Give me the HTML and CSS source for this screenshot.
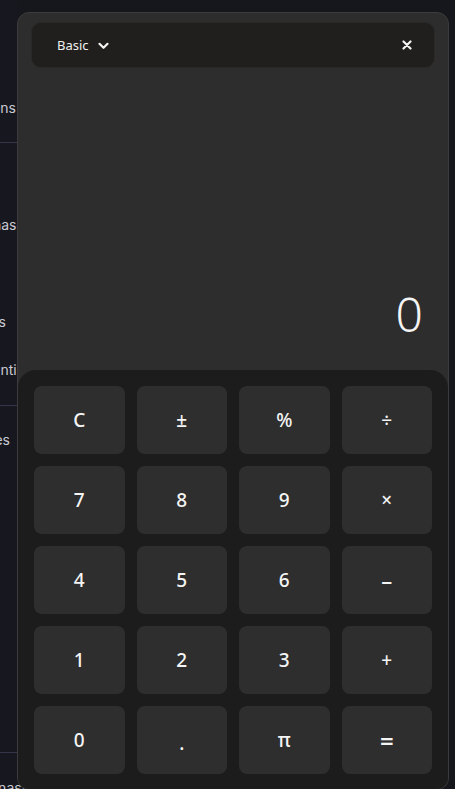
FILE: index.html
```html
<!DOCTYPE html>
<html lang="en">
<head>
<meta charset="utf-8">
<title>Calculator</title>
<link rel="stylesheet" href="styles.css">
</head>
<body>
<nav class="sidebar">
  <div class="nav-item item-functions"><span>Functions</span></div>
  <div class="divider div-1"></div>
  <div class="nav-item item-purchases"><span>Purchases</span></div>
  <div class="nav-item item-tools"><span>Tools</span></div>
  <div class="nav-item item-sentiment"><span>Sentiment</span></div>
  <div class="divider div-2"></div>
  <div class="nav-item item-templates"><span>Templates</span></div>
  <div class="divider div-3"></div>
  <div class="nav-item item-gym"><span>Gymnastics</span></div>
</nav>

<section class="calc">
  <header class="calc-header">
    <button class="mode">Basic
      <svg class="chev" width="11" height="8" viewBox="0 0 11 8"><path d="M1.5 1.8 L5.5 5.8 L9.5 1.8" fill="none" stroke="#f2f2f2" stroke-width="2.2" stroke-linecap="round" stroke-linejoin="round"/></svg>
    </button>
    <button class="close" aria-label="Close">
      <svg width="10" height="10" viewBox="0 0 10 10"><path d="M1.5 1.5 L8.5 8.5 M8.5 1.5 L1.5 8.5" stroke="#f2f2f2" stroke-width="2.2" stroke-linecap="round"/></svg>
    </button>
  </header>
  <div class="display">0</div>
  <div class="keypad">
    <button class="key">C</button>
    <button class="key">±</button>
    <button class="key">%</button>
    <button class="key">÷</button>
    <button class="key">7</button>
    <button class="key">8</button>
    <button class="key">9</button>
    <button class="key">×</button>
    <button class="key">4</button>
    <button class="key">5</button>
    <button class="key">6</button>
    <button class="key key-minus">–</button>
    <button class="key">1</button>
    <button class="key">2</button>
    <button class="key">3</button>
    <button class="key">+</button>
    <button class="key">0</button>
    <button class="key key-dot">.</button>
    <button class="key">π</button>
    <button class="key key-eq">=</button>
  </div>
</section>
</body>
</html>
```
FILE: styles.css
```css
* { box-sizing: border-box; }
html, body { margin: 0; padding: 0; }
body {
  width: 455px;
  height: 789px;
  overflow: hidden;
  background: #16161d;
  font-family: "Noto Sans", "Open Sans", sans-serif;
  position: relative;
}

.sidebar {
  width: 17px;
  height: 789px;
  display: flex;
  flex-direction: column;
  background: #17171f;
  font-family: Inter, "Noto Sans", sans-serif;
  font-size: 14px;
  color: #c9c9d2;
}
.sidebar > * { flex-shrink: 0; }
.nav-item {
  display: flex;
  justify-content: flex-end;
  white-space: nowrap;
  height: 20px;
  line-height: 20px;
}
.divider { height: 1px; background: #35354a; width: 100%; }

.item-functions { margin-top: 98px; padding-right: 1px; }
.div-1 { margin-top: 24px; }
.item-purchases { margin-top: 72px; margin-right: -15px; }
.item-tools { margin-top: 77px; padding-right: 11px; }
.item-sentiment { margin-top: 28px; margin-right: -33px; }
.div-2 { margin-top: 25px; }
.item-templates { margin-top: 24px; padding-right: 7px; }
.div-3 { margin-top: 302px; }
.item-gym { margin-top: 25px; margin-right: -28px; }

.calc {
  position: absolute;
  left: 17px;
  top: 12px;
  width: 432px;
  height: 778px;
  background: #2d2d2d;
  border: 1px solid #3b3b3b;
  border-radius: 12px;
  display: flex;
  flex-direction: column;
  overflow: hidden;
}

.calc-header {
  margin: 9px 13px 0;
  height: 46px;
  flex-shrink: 0;
  background: #201f1d;
  border: 1px solid #2a2927;
  border-radius: 10px;
  display: flex;
  align-items: center;
  justify-content: space-between;
  padding: 0 20px 0 25px;
}
.mode, .close {
  background: none;
  border: none;
  color: #f0f0f0;
  padding: 0;
  font-family: "Noto Sans", sans-serif;
  cursor: pointer;
  display: flex;
  align-items: center;
}
.mode { font-size: 13px; gap: 9px; }
.chev { margin-top: 1px; }
.close { width: 14px; height: 14px; justify-content: center; }

.display {
  flex: 0 0 302px;
  display: flex;
  align-items: flex-end;
  justify-content: flex-end;
  padding: 0 25px 32px 0;
  color: #f4f4f4;
  font-size: 48px;
  font-weight: 300;
  line-height: 1;
}

.keypad {
  flex: 1;
  background: #1c1c1c;
  border-radius: 18px 18px 0 0;
  padding: 16px;
  display: grid;
  grid-template-columns: repeat(4, 1fr);
  grid-auto-rows: 68px;
  gap: 12px;
  align-content: start;
}
.key {
  background: #2e2e2e;
  border: none;
  border-radius: 8px;
  color: #f4f4f4;
  font-family: "Noto Sans", sans-serif;
  font-size: 19px;
  font-weight: 500;
  display: flex;
  align-items: center;
  justify-content: center;
  padding: 0;
}
.key-minus { font-size: 22px; }
.key-dot { padding-top: 6px; }
.key-eq { font-size: 24px; font-weight: 600; }
```
